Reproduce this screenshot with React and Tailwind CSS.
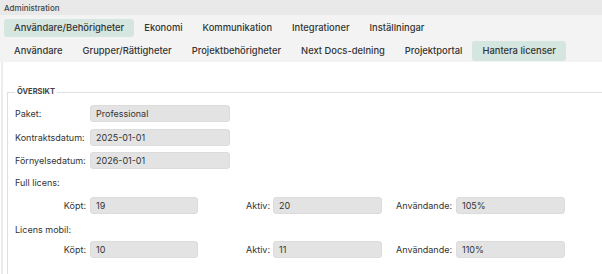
import React from 'react';

const topTabs = ['Användare/Behörigheter', 'Ekonomi', 'Kommunikation', 'Integrationer', 'Inställningar'];
const subTabs = ['Användare', 'Grupper/Rättigheter', 'Projektbehörigheter', 'Next Docs-delning', 'Projektportal', 'Hantera licenser'];

const Field = ({ value, width = 'w-[140px]' }) => (
  <div className={`${width} h-[17px] rounded-[3px] bg-[#e3e3e3] border border-[#dcdcdc] flex items-center pl-[5px] text-[9px] text-[#333]`}>
    {value}
  </div>
);

const LicenseRow = ({ bought, active, usage, className }) => (
  <div className={`flex items-center ${className}`}>
    <span className="w-[75px] text-right pr-[4px] text-[9px]">Köpt:</span>
    <Field value={bought} width="w-[108px]" />
    <span className="w-[75px] text-right pr-[3px] text-[9px]">Aktiv:</span>
    <Field value={active} width="w-[109px]" />
    <span className="w-[74px] text-right pr-[4px] text-[9px]">Användande:</span>
    <Field value={usage} width="w-[109px]" />
  </div>
);

export default function App() {
  return (
    <div className="w-[602px] h-[274px] overflow-hidden bg-white text-[#333] font-['Inter',sans-serif]">
      {/* ── Header ── */}
      <div className="h-[15px] bg-[#e9e9e9] px-[4px] flex items-center text-[8px] font-medium text-[#444]">
        Administration
      </div>

      {/* ── Top tabs ── */}
      <div className="h-[24px] bg-[#f3f3f3] px-[4px] pt-[4px] flex items-start">
        {topTabs.map((t, i) => (
          <div
            key={t}
            className={`h-[18px] px-[10px] flex items-center rounded-[3px] text-[9.4px] font-medium ${
              i === 0 ? 'bg-[#d5e5df]' : ''
            }`}
          >
            {t}
          </div>
        ))}
      </div>

      {/* ── Sub tabs ── */}
      <div className="h-[23px] bg-[#f3f3f3] px-[4px] pt-[2px] flex items-start">
        {subTabs.map((t, i) => (
          <div
            key={t}
            className={`h-[20px] px-[10px] flex items-center rounded-[3px] text-[9.4px] font-medium ${
              i === subTabs.length - 1 ? 'bg-[#d5e5df]' : ''
            }`}
          >
            {t}
          </div>
        ))}
      </div>

      {/* ── Body ── */}
      <div className="h-[212px] ml-[1px] border-l-2 border-[#ececec] pl-[4px] pt-[25px]">
        <fieldset className="w-[620px] h-[220px] border border-[#e0e0e0] pl-[7px]">
          <legend className="ml-[0px] px-[2px] h-[10px] leading-[10px] text-[7.5px] font-bold text-[#444]">
            ÖVERSIKT
          </legend>

          <div className="flex items-center mt-[8px]">
            <span className="w-[75px] text-[9px]">Paket:</span>
            <Field value="Professional" />
          </div>
          <div className="flex items-center mt-[7px]">
            <span className="w-[75px] text-[9px]">Kontraktsdatum:</span>
            <Field value="2025-01-01" />
          </div>
          <div className="flex items-center mt-[6px]">
            <span className="w-[75px] text-[9px]">Förnyelsedatum:</span>
            <Field value="2026-01-01" />
          </div>

          <div className="mt-[8px] h-[12px] flex items-center text-[9px]">Full licens:</div>
          <LicenseRow bought="19" active="20" usage="105%" className="mt-[8px]" />

          <div className="mt-[10px] h-[12px] flex items-center text-[9px]">Licens mobil:</div>
          <LicenseRow bought="10" active="11" usage="110%" className="mt-[5px]" />
        </fieldset>
      </div>
    </div>
  );
}
